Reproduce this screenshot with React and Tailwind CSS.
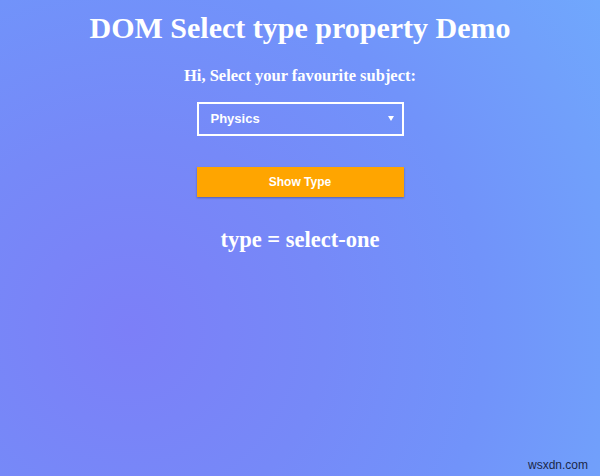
import React from "react"

export default function App() {
  return (
    <div className="relative w-[600px] h-[476px] overflow-hidden bg-[radial-gradient(circle_at_130px_330px,#7c7ff8_0px,#7689f8_195px,#7193fa_355px,#71a0fb_492px,#70a8fd_580px)] text-white">
      <div className="flex flex-col items-center pt-[13px]">
        <h1 className="text-[30px] leading-[30px] font-bold font-['Liberation_Serif','Times_New_Roman',serif]">
          DOM Select type property Demo
        </h1>

        <p className="mt-[25px] text-[16.5px] leading-[16px] font-bold font-['Liberation_Serif','Times_New_Roman',serif]">
          Hi, Select your favourite subject:
        </p>

        <div
          role="listbox"
          className="mt-[18px] w-[207px] h-[34px] border-2 border-white flex items-center justify-between pl-[12px] pr-[8px] font-['Liberation_Sans',Arial,sans-serif]"
        >
          <span className="text-[13px] font-bold">Physics</span>
          <svg width="6" height="5" viewBox="0 0 6 5" className="mt-[-2px]">
            <path d="M0 0h6L3 5z" fill="#fff" />
          </svg>
        </div>

        <button className="mt-[31px] w-[207px] h-[30px] bg-[#ffa500] text-[12px] font-bold text-white shadow-[0_1px_2px_rgba(0,0,0,0.3)] font-['Liberation_Sans',Arial,sans-serif]">
          Show Type
        </button>

        <h2 className="mt-[32px] text-[22.5px] leading-[22px] font-bold font-['Liberation_Serif','Times_New_Roman',serif]">
          type = select-one
        </h2>
      </div>

      <span className="absolute right-[12px] bottom-[5px] text-[12px] leading-[12px] text-[#1b2848] font-['Liberation_Sans',Arial,sans-serif]">
        wsxdn.com
      </span>
    </div>
  )
}
